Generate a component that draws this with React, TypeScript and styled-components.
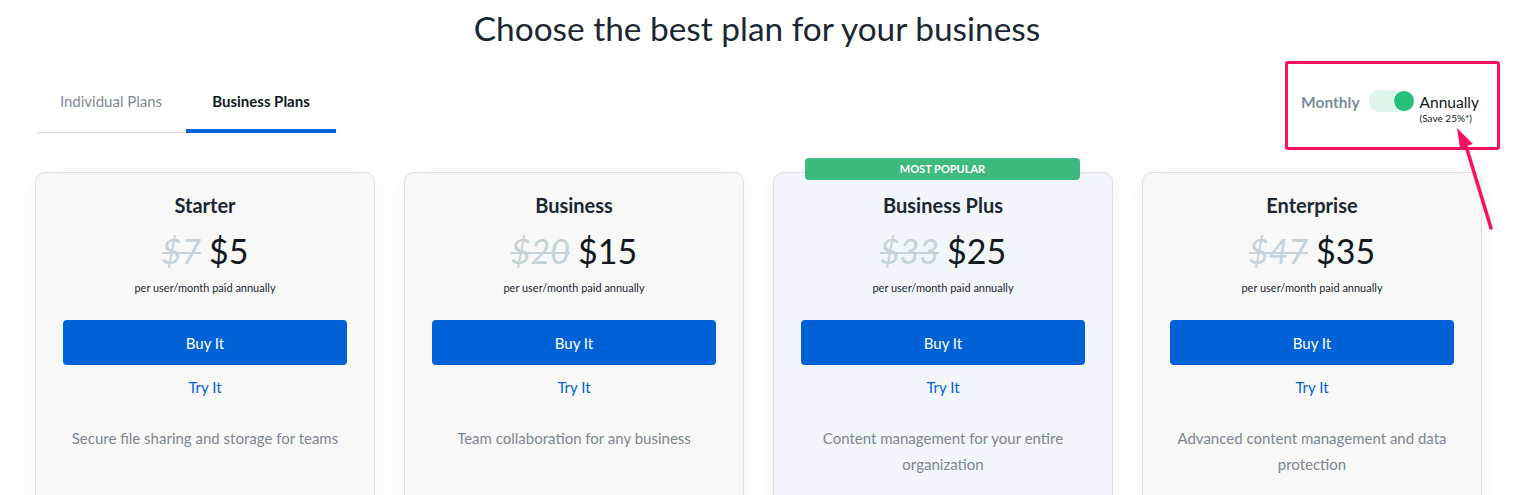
import React from "react";
import styled, { createGlobalStyle } from "styled-components";

type Plan = {
  name: string;
  oldPrice: string;
  price: string;
  description: string;
  popular?: boolean;
};

const plans: Plan[] = [
  {
    name: "Starter",
    oldPrice: "$7",
    price: "$5",
    description: "Secure file sharing and storage for teams",
  },
  {
    name: "Business",
    oldPrice: "$20",
    price: "$15",
    description: "Team collaboration for any business",
  },
  {
    name: "Business Plus",
    oldPrice: "$33",
    price: "$25",
    description: "Content management for your entire organization",
    popular: true,
  },
  {
    name: "Enterprise",
    oldPrice: "$47",
    price: "$35",
    description: "Advanced content management and data protection",
  },
];

export default function App() {
  return (
    <>
      <GlobalStyle />
      <Page>
        <Title>Choose the best plan for your business</Title>
        <TopBar>
          <Tabs>
            <Tab>Individual Plans</Tab>
            <Tab active>Business Plans</Tab>
          </Tabs>
          <BillingToggle>
            <ToggleLabel>Monthly</ToggleLabel>
            <Switch>
              <Knob />
            </Switch>
            <AnnualLabel>
              <span>Annually</span>
              <SaveNote>(Save 25%*)</SaveNote>
            </AnnualLabel>
            <Highlight />
            {/* annotation arrow pointing at the toggle */}
            <Arrow width="50" height="110" viewBox="0 0 50 110">
              <line x1="40" y1="101" x2="15" y2="19" stroke="#f7105c" strokeWidth="3.5" strokeLinecap="round" />
              <polygon points="6,1 9,21 22,17" fill="#f7105c" />
            </Arrow>
          </BillingToggle>
        </TopBar>
        <Cards>
          {plans.map((plan) => (
            <Card key={plan.name} popular={plan.popular}>
              {plan.popular && <Badge>MOST POPULAR</Badge>}
              <PlanName>{plan.name}</PlanName>
              <PriceRow>
                <OldPrice>{plan.oldPrice}</OldPrice>
                <Price>{plan.price}</Price>
              </PriceRow>
              <PriceNote>per user/month paid annually</PriceNote>
              <BuyButton>Buy It</BuyButton>
              <TryLink>Try It</TryLink>
              <Description>{plan.description}</Description>
            </Card>
          ))}
        </Cards>
      </Page>
    </>
  );
}

const GlobalStyle = createGlobalStyle`
  html, body {
    margin: 0;
    padding: 0;
    background: #ffffff;
    overflow: hidden;
  }
  body {
    font-family: Lato, "Open Sans", "Liberation Sans", sans-serif;
    color: #1b2733;
  }
`;

const Page = styled.div`
  width: 1530px;
  height: 495px;
  padding: 0 51px 0 35px;
  box-sizing: border-box;
`;

const Title = styled.h1`
  margin: 0;
  padding-top: 8px;
  text-align: center;
  font-size: 33.4px;
  font-weight: 400;
  line-height: 40px;
  color: #1b2733;
`;

const TopBar = styled.div`
  display: flex;
  justify-content: space-between;
  align-items: flex-end;
  margin-top: 19px;
`;

const Tabs = styled.div`
  display: flex;
  margin-left: 1px;
`;

const Tab = styled.div<{ active?: boolean }>`
  width: 150px;
  height: 66px;
  box-sizing: border-box;
  padding-top: 25px;
  text-align: center;
  font-size: 15px;
  font-weight: ${(p) => (p.active ? 700 : 400)};
  color: ${(p) => (p.active ? "#111820" : "#7d8b99")};
  border-bottom: ${(p) => (p.active ? "4px solid #0062d6" : "1px solid #dcdcdc")};
`;

const BillingToggle = styled.div`
  position: relative;
  z-index: 2;
  display: flex;
  align-items: flex-start;
  height: 66px;
`;

const ToggleLabel = styled.span`
  font-size: 15.5px;
  font-weight: 700;
  color: #7d8b99;
  line-height: 20px;
  margin: 25px 9px 0 0;
`;

const Switch = styled.div`
  position: relative;
  width: 46px;
  height: 22px;
  border-radius: 11px;
  background: #dff5e9;
  margin: 23px 5px 0 0;
`;

const Knob = styled.div`
  position: absolute;
  right: 0;
  top: 0;
  width: 20px;
  height: 20px;
  border-radius: 50%;
  background: #27bf7c;
  border: 1px solid #ffffff;
`;

const AnnualLabel = styled.div`
  display: flex;
  flex-direction: column;
  margin-top: 25px;
  font-size: 15.5px;
  line-height: 20px;
  color: #111820;
`;

const SaveNote = styled.span`
  font-size: 10px;
  line-height: 12px;
`;

const Highlight = styled.div`
  position: absolute;
  left: -16px;
  right: -21px;
  top: -6px;
  height: 89px;
  box-sizing: border-box;
  border: 3px solid #f7105c;
  border-radius: 3px;
  pointer-events: none;
`;

const Arrow = styled.svg`
  position: absolute;
  left: 150px;
  top: 60px;
  overflow: visible;
`;

const Cards = styled.div`
  display: grid;
  grid-template-columns: repeat(4, 340px);
  gap: 29px;
  margin-top: 39px;
`;

const Card = styled.div<{ popular?: boolean }>`
  position: relative;
  height: 400px;
  box-sizing: border-box;
  border: 1px solid #e1e1e1;
  border-radius: 10px;
  background: ${(p) => (p.popular ? "#f2f5fa" : "#f8f8f8")};
  box-shadow: 0 4px 22px rgba(0, 0, 0, 0.05);
  padding: 20px 27px 0;
  display: flex;
  flex-direction: column;
  align-items: center;
  text-align: center;
`;

const Badge = styled.div`
  position: absolute;
  top: -15px;
  left: 31px;
  right: 32px;
  height: 22px;
  border-radius: 4px;
  background: #3fba7e;
  color: #ffffff;
  font-size: 11px;
  font-weight: 700;
  line-height: 22px;
  text-align: center;
`;

const PlanName = styled.div`
  font-size: 20px;
  font-weight: 700;
  line-height: 24px;
  color: #1b2733;
`;

const PriceRow = styled.div`
  display: flex;
  gap: 8px;
  align-items: baseline;
  margin-top: 11px;
  font-size: 34px;
  line-height: 46px;
`;

const OldPrice = styled.span`
  color: #c6d3da;
  font-style: italic;
  text-decoration: line-through;
  text-decoration-thickness: 2px;
`;

const Price = styled.span`
  color: #111820;
`;

const PriceNote = styled.div`
  font-size: 11px;
  line-height: 14px;
  color: #1b2733;
  margin-top: 7px;
`;

const BuyButton = styled.button`
  width: 100%;
  height: 45px;
  margin-top: 25px;
  border: none;
  border-radius: 4px;
  background: #0062d6;
  color: #ffffff;
  font-family: inherit;
  font-size: 15px;
`;

const TryLink = styled.a`
  display: block;
  margin-top: 12px;
  font-size: 15px;
  line-height: 20px;
  color: #0062d6;
`;

const Description = styled.p`
  margin: 28px 0 0;
  font-size: 15px;
  line-height: 26px;
  color: #7d8794;
`;
